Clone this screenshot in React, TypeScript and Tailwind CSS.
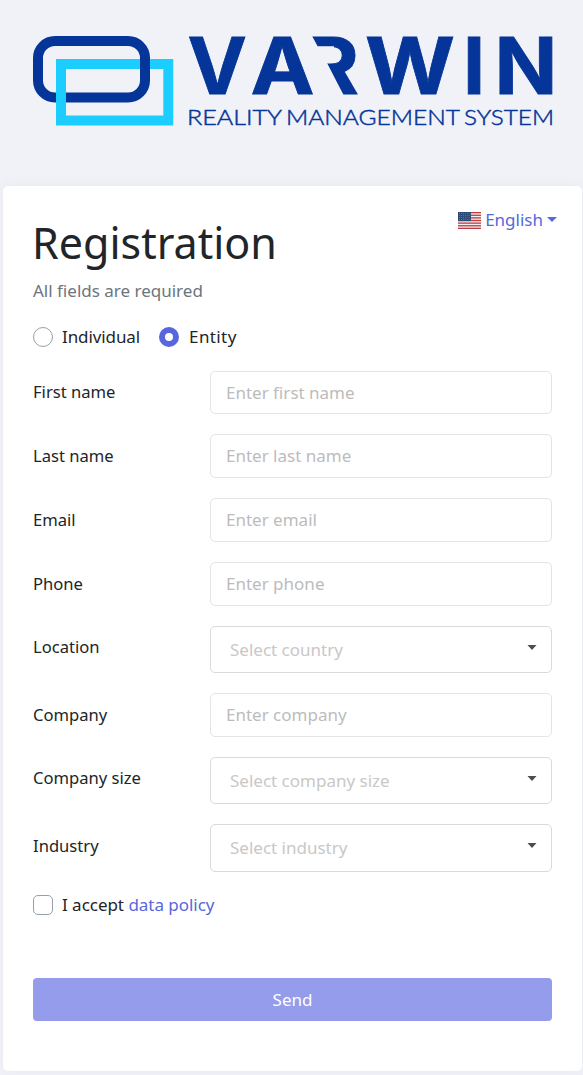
import React, { useState } from "react";

type Field = {
  label: string;
  placeholder: string;
  kind: "input" | "select";
  height: string;
  labelPad: string;
};

const fields: Field[] = [
  { label: "First name", placeholder: "Enter first name", kind: "input", height: "h-[43px]", labelPad: "pt-[9px]" },
  { label: "Last name", placeholder: "Enter last name", kind: "input", height: "h-[44px]", labelPad: "pt-[10px]" },
  { label: "Email", placeholder: "Enter email", kind: "input", height: "h-[44px]", labelPad: "pt-[10px]" },
  { label: "Phone", placeholder: "Enter phone", kind: "input", height: "h-[44px]", labelPad: "pt-[10px]" },
  { label: "Location", placeholder: "Select country", kind: "select", height: "h-[47px]", labelPad: "pt-[9px]" },
  { label: "Company", placeholder: "Enter company", kind: "input", height: "h-[44px]", labelPad: "pt-[10px]" },
  { label: "Company size", placeholder: "Select company size", kind: "select", height: "h-[47px]", labelPad: "pt-[9px]" },
  { label: "Industry", placeholder: "Select industry", kind: "select", height: "h-[48px]", labelPad: "pt-[10px]" },
];

function Logo() {
  return (
    <svg width="519" height="91" viewBox="33 36 519 91" className="block overflow-visible" role="img" aria-label="Varwin">
      <rect x="38" y="41" width="107" height="56.5" rx="17" fill="none" stroke="#053598" strokeWidth="10" />
      <rect x="61" y="64" width="107.3" height="56.5" fill="none" stroke="#1bceff" strokeWidth="10" />
      <path d="M145 57V72" stroke="#053598" strokeWidth="10" />
      <g fill="#053598" fontFamily="Inter, sans-serif" fontWeight="700" fontSize="78.8" stroke="#053598" strokeWidth="0.8">
        <text x="304" y="93.6" textLength="55" lengthAdjust="spacingAndGlyphs">R</text>
        <path d="M300 34H311L317.6 46.2H334V62.5H326.8L343.5 95H300Z" fill="#f1f2f8" stroke="none" />
        <text x="187.6" y="93.6" textLength="59.4" lengthAdjust="spacingAndGlyphs">V</text>
        <text x="250.5" y="93.6" textLength="64" lengthAdjust="spacingAndGlyphs">A</text>
        <text x="365" y="93.6" textLength="90" lengthAdjust="spacingAndGlyphs">W</text>
        <text x="462.9" y="93.6">I</text>
        <text x="494.6" y="93.6" textLength="62.8" lengthAdjust="spacingAndGlyphs">N</text>
      </g>
      <g fill="#053598" fontFamily="Lato, sans-serif" fontWeight="300" fontSize="22.3" stroke="#053598" strokeWidth="0.5">
        <text x="187" y="125.3" textLength="95" lengthAdjust="spacingAndGlyphs">REALITY</text>
        <text x="286" y="125.3" textLength="174" lengthAdjust="spacingAndGlyphs">MANAGEMENT</text>
        <text x="464" y="125.3" textLength="90" lengthAdjust="spacingAndGlyphs">SYSTEM</text>
      </g>
    </svg>
  );
}

function Flag() {
  return (
    <svg width="23" height="17" viewBox="0 0 23 17" className="block">
      <rect width="23" height="17" fill="#f5eeee" />
      {[0, 2.62, 5.24, 7.86, 10.48, 13.1, 15.7].map((y) => (
        <rect key={y} y={y} width="23" height="1.31" fill="#bd3d44" />
      ))}
      <rect width="13" height="9.1" fill="#2c4a76" />
      {[1.5, 3.5, 5.5, 7.5].map((y) => (
        <path key={y} d={`M1 ${y}H13`} stroke="#8093b0" strokeWidth="0.7" strokeDasharray="0.8 1.3" />
      ))}
    </svg>
  );
}

type RadioProps = { label: string; checked: boolean; tracking: string; onSelect: () => void };

function Radio({ label, checked, tracking, onSelect }: RadioProps) {
  return (
    <button type="button" role="radio" aria-checked={checked} onClick={onSelect} className="flex items-center gap-[9px]">
      <span
        className={
          checked
            ? "size-5 rounded-full border-[6px] border-[#5867dd] bg-white"
            : "size-5 rounded-full border border-[#97a0a9] bg-white"
        }
      />
      <span className={`leading-[26px] ${tracking}`}>{label}</span>
    </button>
  );
}

function FieldRow({ field }: { field: Field }) {
  return (
    <div className="flex">
      <label className={`w-[177px] shrink-0 text-[16.6px] leading-6 ${field.labelPad}`}>{field.label}</label>
      {field.kind === "input" ? (
        <input
          placeholder={field.placeholder}
          className={`min-w-0 flex-1 rounded-[5px] border border-[#e2e4e6] bg-white px-[15px] pb-px placeholder:text-[#bcbcbc] ${field.height}`}
        />
      ) : (
        <button
          type="button"
          className={`flex min-w-0 flex-1 items-center justify-between rounded-[5px] border border-[#dadada] bg-white pr-[14px] pl-[19px] text-[#c8c8c8] ${field.height}`}
        >
          <span>{field.placeholder}</span>
          <svg width="10" height="5" viewBox="0 0 10 5" className="-mt-[5px] block">
            <path d="M0.5 0H9.5L5 5Z" fill="#4d4d4d" />
          </svg>
        </button>
      )}
    </div>
  );
}

export default function App() {
  const [type, setType] = useState("Entity");
  return (
    <div className="min-h-[1075px] w-full bg-[#f1f2f8] pt-9 pr-px pb-1 pl-[3px] font-['Noto_Sans',sans-serif] text-[17px] text-[#212529]">
      <header className="px-[30px]">
        <Logo />
      </header>
      <main className="relative mt-[59px] h-[885px] rounded-[5px] bg-white px-[30px] pt-9 shadow-[0_0_13px_rgba(82,63,105,0.05)]">
        <button type="button" className="absolute top-[22px] right-[25px] flex h-6 items-center text-[#5867dd]">
          <Flag />
          <span className="ml-1">English</span>
          <svg width="10" height="5" viewBox="0 0 10 5" className="-mt-0.5 ml-1 block">
            <path d="M0 0H10L5 5Z" fill="#5867dd" />
          </svg>
        </button>
        <h1 className="-mt-px -ml-px text-[43px] leading-[44px]">Registration</h1>
        <p className="mt-[13px] leading-[26px] text-[#6c757d]">All fields are required</p>
        <div role="radiogroup" className="mt-5 flex gap-[19px]">
          <Radio
            label="Individual"
            tracking="tracking-[-0.1px]"
            checked={type === "Individual"}
            onSelect={() => setType("Individual")}
          />
          <Radio
            label="Entity"
            tracking="pl-px tracking-[0.4px]"
            checked={type === "Entity"}
            onSelect={() => setType("Entity")}
          />
        </div>
        <form className="mt-[21px] flex flex-col gap-5" onSubmit={(e) => e.preventDefault()}>
          {fields.map((f) => (
            <FieldRow key={f.label} field={f} />
          ))}
          <div className="mt-px flex h-6 items-center">
            <span className="mr-[9px] size-5 rounded-[5px] border border-[#97a0a9] bg-white" />
            <span className="tracking-[-0.03px]">
              I accept <a className="text-[#5867dd]">data policy</a>
            </span>
          </div>
          <button type="submit" className="mt-[41px] h-[43px] rounded-[4px] bg-[#949ceb] text-white">
            Send
          </button>
        </form>
      </main>
    </div>
  );
}
